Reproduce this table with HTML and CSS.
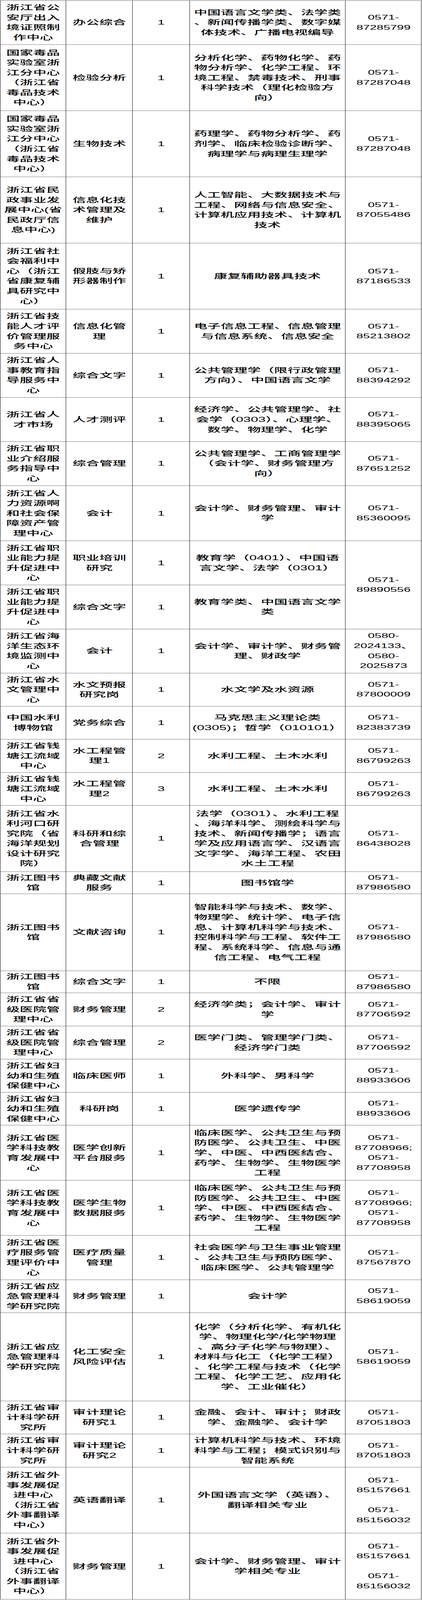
FILE: index.html
```html
<!DOCTYPE html>
<html lang="zh-CN">
<head>
<meta charset="utf-8">
<title>岗位表</title>
<link rel="stylesheet" href="styles.css">
</head>
<body>
<div class="frame">
<div class="sheet">
<div class="row r4"><div class="cell"><span>浙江省公<br>安厅出入<br>境证照制<br>作中心</span></div><div class="cell"><span>办公综合</span></div><div class="cell num"><span>1</span></div><div class="cell"><span>中国语言文学类、法学类<br>、新闻传播学类、数字媒<br>体技术、广播电视编导</span></div><div class="cell tel"><span>0571-<br>87285799</span></div></div>
<div class="row r6"><div class="cell"><span>国家毒品<br>实验室浙<br>江分中心<br>（浙江省<br>毒品技术<br>中心）</span></div><div class="cell"><span>检验分析</span></div><div class="cell num"><span>1</span></div><div class="cell"><span>分析化学、药物化学、药<br>物分析学、化学工程、环<br>境工程、禁毒技术、刑事<br>科学技术（理化检验方<br>向）</span></div><div class="cell tel"><span>0571-<br>87287048</span></div></div>
<div class="row r6"><div class="cell"><span>国家毒品<br>实验室浙<br>江分中心<br>（浙江省<br>毒品技术<br>中心）</span></div><div class="cell"><span>生物技术</span></div><div class="cell num"><span>1</span></div><div class="cell"><span>药理学、药物分析学、药<br>剂学、临床检验诊断学、<br>病理学与病理生理学</span></div><div class="cell tel"><span>0571-<br>87287048</span></div></div>
<div class="row r6"><div class="cell"><span>浙江省民<br>政事业发<br>展中心(省<br>民政厅信<br>息中心)</span></div><div class="cell"><span>信息化技<br>术管理及<br>维护</span></div><div class="cell num"><span>1</span></div><div class="cell"><span>人工智能、大数据技术与<br>工程、网络与信息安全、<br>计算机应用技术、计算机<br>技术</span></div><div class="cell tel"><span>0571-<br>87055486</span></div></div>
<div class="row r6"><div class="cell"><span>浙江省社<br>会福利中<br>心（浙江<br>省康复辅<br>具研究中<br>心）</span></div><div class="cell"><span>假肢与矫<br>形器制作</span></div><div class="cell num"><span>1</span></div><div class="cell"><span>康复辅助器具技术</span></div><div class="cell tel"><span>0571-<br>87186533</span></div></div>
<div class="row r4"><div class="cell"><span>浙江省技<br>能人才评<br>价管理服<br>务中心</span></div><div class="cell"><span>信息化管<br>理</span></div><div class="cell num"><span>1</span></div><div class="cell"><span>电子信息工程、信息管理<br>与信息系统、信息安全</span></div><div class="cell tel"><span>0571-<br>85213802</span></div></div>
<div class="row r4"><div class="cell"><span>浙江省人<br>事教育指<br>导服务中<br>心</span></div><div class="cell"><span>综合文字</span></div><div class="cell num"><span>1</span></div><div class="cell"><span>公共管理学（限行政管理<br>方向）、中国语言文学</span></div><div class="cell tel"><span>0571-<br>88394292</span></div></div>
<div class="row r4"><div class="cell"><span>浙江省人<br>才市场</span></div><div class="cell"><span>人才测评</span></div><div class="cell num"><span>1</span></div><div class="cell"><span>经济学、公共管理学、社<br>会学（0303）、心理学、<br>数学、物理学、化学</span></div><div class="cell tel"><span>0571-<br>88395065</span></div></div>
<div class="row r4"><div class="cell"><span>浙江省职<br>业介绍服<br>务指导中<br>心</span></div><div class="cell"><span>综合管理</span></div><div class="cell num"><span>1</span></div><div class="cell"><span>公共管理学、工商管理学<br>（会计学、财务管理方<br>向）</span></div><div class="cell tel"><span>0571-<br>87651252</span></div></div>
<div class="row r5"><div class="cell"><span>浙江省人<br>力资源啊<br>和社会保<br>障资产管<br>理中心</span></div><div class="cell"><span>会计</span></div><div class="cell num"><span>1</span></div><div class="cell"><span>会计学、财务管理、审计<br>学</span></div><div class="cell tel"><span>0571-<br>85360095</span></div></div>
<div class="row pair"><div class="cell"><span>浙江省职<br>业能力提<br>升促进中<br>心</span></div><div class="cell"><span>职业培训<br>研究</span></div><div class="cell num"><span>1</span></div><div class="cell"><span>教育学（0401）、中国语<br>言文学、法学（0301）</span></div><div class="cell tel span2"><span>0571-<br>89890556</span></div><div class="cell"><span>浙江省职<br>业能力提<br>升促进中<br>心</span></div><div class="cell"><span>综合文字</span></div><div class="cell num"><span>1</span></div><div class="cell"><span>教育学类、中国语言文学<br>类</span></div></div>
<div class="row r4"><div class="cell"><span>浙江省海<br>洋生态环<br>境监测中<br>心</span></div><div class="cell"><span>会计</span></div><div class="cell num"><span>1</span></div><div class="cell"><span>会计学、审计学、财务管<br>理、财政学</span></div><div class="cell tel"><span>0580-<br>2024133、<br>0580-<br>2025873</span></div></div>
<div class="row r3"><div class="cell"><span>浙江省水<br>文管理中<br>心</span></div><div class="cell"><span>水文预报<br>研究岗</span></div><div class="cell num"><span>1</span></div><div class="cell"><span>水文学及水资源</span></div><div class="cell tel"><span>0571-<br>87800009</span></div></div>
<div class="row r3"><div class="cell"><span>中国水利<br>博物馆</span></div><div class="cell"><span>党务综合</span></div><div class="cell num"><span>1</span></div><div class="cell"><span>马克思主义理论类<br>(0305)；哲学（010101）</span></div><div class="cell tel"><span>0571-<br>82383739</span></div></div>
<div class="row r3"><div class="cell"><span>浙江省钱<br>塘江流域<br>中心</span></div><div class="cell"><span>水工程管<br>理1</span></div><div class="cell num"><span>2</span></div><div class="cell"><span>水利工程、土木水利</span></div><div class="cell tel"><span>0571-<br>86799263</span></div></div>
<div class="row r3"><div class="cell"><span>浙江省钱<br>塘江流域<br>中心</span></div><div class="cell"><span>水工程管<br>理2</span></div><div class="cell num"><span>3</span></div><div class="cell"><span>水利工程、土木水利</span></div><div class="cell tel"><span>0571-<br>86799263</span></div></div>
<div class="row r6"><div class="cell"><span>浙江省水<br>利河口研<br>究院（省<br>海洋规划<br>设计研究<br>院）</span></div><div class="cell"><span>科研和综<br>合管理</span></div><div class="cell num"><span>1</span></div><div class="cell"><span>法学（0301）、水利工程<br>、海洋科学、测绘科学与<br>技术、新闻传播学；语言<br>学及应用语言学、汉语言<br>文字学、海洋工程、农田<br>水土工程</span></div><div class="cell tel"><span>0571-<br>86438028</span></div></div>
<div class="row r2"><div class="cell"><span>浙江图书<br>馆</span></div><div class="cell"><span>典藏文献<br>服务</span></div><div class="cell num"><span>1</span></div><div class="cell"><span>图书馆学</span></div><div class="cell tel"><span>0571-<br>87986580</span></div></div>
<div class="row r7"><div class="cell"><span>浙江图书<br>馆</span></div><div class="cell"><span>文献咨询</span></div><div class="cell num"><span>1</span></div><div class="cell"><span>智能科学与技术、数学、<br>物理学、统计学、电子信<br>息、计算机科学与技术、<br>控制科学与工程、软件工<br>程、系统科学、信息与通<br>信工程、电气工程</span></div><div class="cell tel"><span>0571-<br>87986580</span></div></div>
<div class="row r2"><div class="cell"><span>浙江图书<br>馆</span></div><div class="cell"><span>综合文字</span></div><div class="cell num"><span>1</span></div><div class="cell"><span>不限</span></div><div class="cell tel"><span>0571-<br>87986580</span></div></div>
<div class="row r3"><div class="cell"><span>浙江省省<br>级医院管<br>理中心</span></div><div class="cell"><span>财务管理</span></div><div class="cell num"><span>2</span></div><div class="cell"><span>经济学类；会计学、审计<br>学</span></div><div class="cell tel"><span>0571-<br>87706592</span></div></div>
<div class="row r3"><div class="cell"><span>浙江省省<br>级医院管<br>理中心</span></div><div class="cell"><span>综合管理</span></div><div class="cell num"><span>2</span></div><div class="cell"><span>医学门类、管理学门类、<br>经济学门类</span></div><div class="cell tel"><span>0571-<br>87706592</span></div></div>
<div class="row r3"><div class="cell"><span>浙江省妇<br>幼和生殖<br>保健中心</span></div><div class="cell"><span>临床医师</span></div><div class="cell num"><span>1</span></div><div class="cell"><span>外科学、男科学</span></div><div class="cell tel"><span>0571-<br>88933606</span></div></div>
<div class="row r3"><div class="cell"><span>浙江省妇<br>幼和生殖<br>保健中心</span></div><div class="cell"><span>科研岗</span></div><div class="cell num"><span>1</span></div><div class="cell"><span>医学遗传学</span></div><div class="cell tel"><span>0571-<br>88933606</span></div></div>
<div class="row r5"><div class="cell"><span>浙江省医<br>学科技教<br>育发展中<br>心</span></div><div class="cell"><span>医学创新<br>平台服务</span></div><div class="cell num"><span>1</span></div><div class="cell"><span>临床医学、公共卫生与预<br>防医学、公共卫生、中医<br>学、中医、中西医结合、<br>药学、生物学、生物医学<br>工程</span></div><div class="cell tel"><span>0571-<br>87708966;<br>0571-<br>87708958</span></div></div>
<div class="row r5"><div class="cell"><span>浙江省医<br>学科技教<br>育发展中<br>心</span></div><div class="cell"><span>医学生物<br>数据服务</span></div><div class="cell num"><span>1</span></div><div class="cell"><span>临床医学、公共卫生与预<br>防医学、公共卫生、中医<br>学、中医、中西医结合、<br>药学、生物学、生物医学<br>工程</span></div><div class="cell tel"><span>0571-<br>87708966;<br>0571-<br>87708958</span></div></div>
<div class="row r4"><div class="cell"><span>浙江省医<br>疗服务管<br>理评价中<br>心</span></div><div class="cell"><span>医疗质量<br>管理</span></div><div class="cell num"><span>1</span></div><div class="cell"><span>社会医学与卫生事业管理<br>、公共卫生与预防医学、<br>临床医学、公共管理学</span></div><div class="cell tel"><span>0571-<br>87567870</span></div></div>
<div class="row r3"><div class="cell"><span>浙江省应<br>急管理科<br>学研究院</span></div><div class="cell"><span>财务管理</span></div><div class="cell num"><span>1</span></div><div class="cell"><span>会计学</span></div><div class="cell tel"><span>0571-<br>58619059</span></div></div>
<div class="row r8"><div class="cell"><span>浙江省应<br>急管理科<br>学研究院</span></div><div class="cell"><span>化工安全<br>风险评估</span></div><div class="cell num"><span>1</span></div><div class="cell"><span>化学（分析化学、有机化<br>学、物理化学/化学物理<br>、高分子化学与物理）、<br>材料与化工（化学工程）<br>、化学工程与技术（化学<br>工程、化学工艺、应用化<br>学、工业催化）</span></div><div class="cell tel"><span>0571-<br>58619059</span></div></div>
<div class="row r3"><div class="cell"><span>浙江省审<br>计科学研<br>究所</span></div><div class="cell"><span>审计理论<br>研究1</span></div><div class="cell num"><span>1</span></div><div class="cell"><span>金融、会计、审计；财政<br>学、金融学、会计学</span></div><div class="cell tel"><span>0571-<br>87051803</span></div></div>
<div class="row r3"><div class="cell"><span>浙江省审<br>计科学研<br>究所</span></div><div class="cell"><span>审计理论<br>研究2</span></div><div class="cell num"><span>1</span></div><div class="cell"><span>计算机科学与技术、环境<br>科学与工程；模式识别与<br>智能系统</span></div><div class="cell tel"><span>0571-<br>87051803</span></div></div>
<div class="row r6"><div class="cell"><span>浙江省外<br>事发展促<br>进中心<br>（浙江省<br>外事翻译<br>中心）</span></div><div class="cell"><span>英语翻译</span></div><div class="cell num"><span>1</span></div><div class="cell"><span>外国语言文学（英语）、<br>翻译相关专业</span></div><div class="cell tel"><span>0571-<br>85157661<br><br>0571-<br>85156032</span></div></div>
<div class="row r6"><div class="cell"><span>浙江省外<br>事发展促<br>进中心<br>（浙江省<br>外事翻译<br>中心）</span></div><div class="cell"><span>财务管理</span></div><div class="cell num"><span>1</span></div><div class="cell"><span>会计学、财务管理、审计<br>学相关专业</span></div><div class="cell tel"><span>0571-<br>85157661<br><br>0571-<br>85156032</span></div></div>
</div>
</div>
<script src="script.js"></script>
</body>
</html>
```

FILE: styles.css
```css
html, body {
  margin: 0;
  padding: 0;
  background: #ffffff;
}

.frame {
  --ky: 1;
  height: 100vh;
  max-height: 6649px;
  overflow: hidden;
}

.sheet {
  box-sizing: border-box;
  width: 899.5px;
  margin-top: 1px;
  border-top: 1px solid #2b2b2b;
  border-left: 1px solid #2b2b2b;
  transform: scale(1.2, var(--ky));
  transform-origin: 0 0;
  font-family: "Liberation Sans", "Noto Sans CJK SC", sans-serif;
  font-size: 28.5px;
  font-weight: 500;
  line-height: 41.5px;
  color: #000000;
}

.row {
  display: grid;
  grid-template-columns: 140.3px 142.1px 121.3px 332.5px 162.3px;
}

.cell {
  box-sizing: border-box;
  display: flex;
  align-items: center;
  justify-content: center;
  text-align: center;
  white-space: nowrap;
  padding: 0 2px;
  border-right: 1px solid #2b2b2b;
  border-bottom: 1px solid #2b2b2b;
  overflow: hidden;
}

.cell.num {
  font-size: 28px;
}

.cell.tel {
  font-size: 26px;
}

.r2 { height: 91.65px; }
.r3 { height: 137.48px; }
.r4 { height: 183.3px; }
.r5 { height: 229.13px; }
.r6 { height: 274.95px; }
.r7 { height: 320.78px; }
.r8 { height: 366.6px; }

.pair {
  grid-template-rows: 183.3px 183.3px;
}

.span2 {
  grid-row: span 2;
}
```

FILE: script.js
```js
(function () {
  var frame = document.querySelector('.frame');
  var fit = function () {
    var h = window.innerHeight || document.documentElement.clientHeight || 6649;
    var k = Math.min(1, h / 6649);
    frame.style.setProperty('--ky', String(k));
  };
  fit();
  window.addEventListener('resize', fit);
})();
```
